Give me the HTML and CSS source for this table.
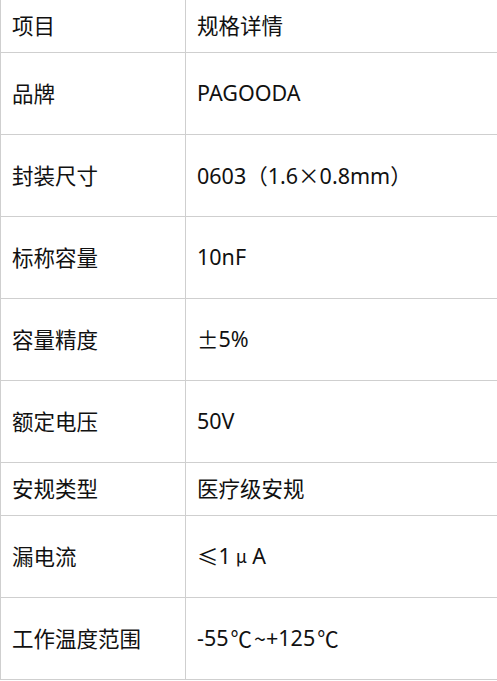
FILE: index.html
```html
<!DOCTYPE html>
<html lang="zh-CN">
<head>
<meta charset="utf-8">
<title>规格</title>
<link rel="stylesheet" href="styles.css">
</head>
<body>
<div class="spec">
  <div class="row short"><div class="cell">项目</div><div class="cell">规格详情</div></div>
  <div class="row tall"><div class="cell">品牌</div><div class="cell">PAGOODA</div></div>
  <div class="row tall"><div class="cell">封装尺寸</div><div class="cell">0603（1.6<span class="cjk">×</span>0.8mm）</div></div>
  <div class="row tall"><div class="cell">标称容量</div><div class="cell">10nF</div></div>
  <div class="row tall"><div class="cell">容量精度</div><div class="cell"><span class="cjk">±</span>5%</div></div>
  <div class="row tall"><div class="cell">额定电压</div><div class="cell">50V</div></div>
  <div class="row short"><div class="cell">安规类型</div><div class="cell">医疗级安规</div></div>
  <div class="row tall"><div class="cell">漏电流</div><div class="cell"><span class="cjk">≤</span>1<span class="cjk mu">μ</span>A</div></div>
  <div class="row tall"><div class="cell">工作温度范围</div><div class="cell">-55<span class="cjk deg">℃</span><span class="cjk">~</span>+125<span class="cjk deg">℃</span></div></div>
</div>
</body>
</html>
```
FILE: styles.css
```css
html, body {
  margin: 0;
  padding: 0;
  background: #fff;
}
body {
  font-family: "Noto Sans", "Noto Sans CJK SC", sans-serif;
  font-size: 21.5px;
  color: #111;
}
.spec {
  width: 498px;
  border-right: 1px solid #cfcfcf;
}
.row {
  display: grid;
  grid-template-columns: 185px 1fr;
  box-sizing: border-box;
  border-bottom: 1px solid #cfcfcf;
}
.short { height: 53px; }
.tall { height: 82px; }
.cell {
  display: flex;
  align-items: center;
  padding-left: 11px;
  padding-bottom: 3px;
  border-left: 1px solid #cfcfcf;
  white-space: nowrap;
}
.cjk {
  font-family: "Noto Sans CJK SC", sans-serif;
}
.mu {
  margin: 0 5px;
  font-size: 18px;
}
.deg {
  margin: 0 2px;
}
```
